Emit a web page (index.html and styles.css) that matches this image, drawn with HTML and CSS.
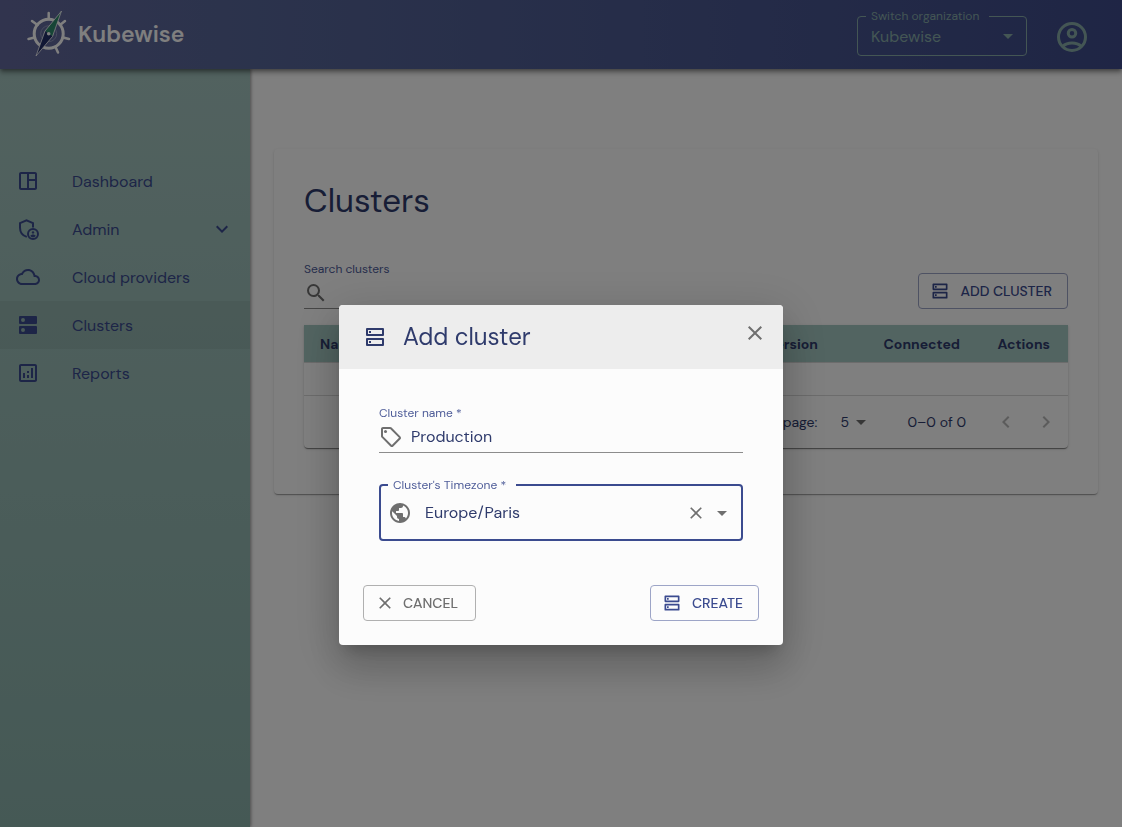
FILE: index.html
```html
<!DOCTYPE html>
<html lang="en">
<head>
<meta charset="utf-8">
<meta name="viewport" content="width=device-width, initial-scale=1">
<title>Kubewise – Clusters</title>
<link rel="stylesheet" href="styles.css">
</head>
<body>
<svg class="sprite" aria-hidden="true">
  <symbol id="i-dashboard" viewBox="0 0 24 24"><path d="M19 3H5c-1.1 0-2 .9-2 2v14c0 1.1.9 2 2 2h14c1.1 0 2-.9 2-2V5c0-1.1-.9-2-2-2zM5 19V5h6v14H5zm14 0h-6v-7h6v7zm0-9h-6V5h6v5z"/></symbol>
  <symbol id="i-admin" viewBox="0 0 24 24"><path fill="none" stroke="currentColor" stroke-width="2" d="M17 10.5V6.2l-6.5-2.9L4 6.2v4.6c0 4.4 2.700 7.900 6.800 9.100"/><circle cx="17" cy="17" r="5" fill="none" stroke="currentColor" stroke-width="2"/><circle cx="17" cy="15.400" r="1.200"/><path d="M14.300 18.900c.3-1 1.700-1.500 2.700-1.500s2.400.5 2.700 1.500c-.6.8-1.600 1.300-2.700 1.300s-2.100-.5-2.700-1.300z"/></symbol>
  <symbol id="i-cloud" viewBox="0 0 24 24"><path d="M19.350 10.040C18.670 6.590 15.640 4 12 4 9.110 4 6.600 5.640 5.350 8.040 2.340 8.360 0 10.910 0 14c0 3.310 2.690 6 6 6h13c2.760 0 5-2.240 5-5 0-2.640-2.050-4.780-4.650-4.960zM19 18H6c-2.210 0-4-1.790-4-4 0-2.050 1.530-3.760 3.560-3.970l1.070-.11.5-.95C8.080 7.140 9.940 6 12 6c2.620 0 4.880 1.860 5.390 4.430l.3 1.500 1.530.11c1.560.1 2.780 1.410 2.780 2.960 0 1.650-1.350 3-3 3z"/></symbol>
  <symbol id="i-dns" viewBox="0 0 24 24"><path fill-rule="evenodd" d="M4 3h16a1 1 0 0 1 1 1v6a1 1 0 0 1-1 1H4a1 1 0 0 1-1-1V4a1 1 0 0 1 1-1zm3 2a2 2 0 1 0 0 4 2 2 0 0 0 0-4zM4 13h16a1 1 0 0 1 1 1v6a1 1 0 0 1-1 1H4a1 1 0 0 1-1-1v-6a1 1 0 0 1 1-1zm3 2a2 2 0 1 0 0 4 2 2 0 0 0 0-4z"/></symbol>
  <symbol id="i-reports" viewBox="0 0 24 24"><path d="M19 3H5c-1.100 0-2 .9-2 2v14c0 1.100.9 2 2 2h14c1.100 0 2-.9 2-2V5c0-1.100-.9-2-2-2zm0 16H5V5h14v14zM7 12h2v5H7zm8-5h2v10h-2zm-4 7h2v3h-2zm0-4h2v2h-2z"/></symbol>
  <symbol id="i-storage" viewBox="0 0 24 24"><path fill="none" stroke="currentColor" stroke-width="2" stroke-linejoin="round" d="M4 4h16v6H4zM4 14h16v6H4z"/><path d="M6 6h2v2H6zM6 16h2v2H6z"/></symbol>
  <symbol id="i-search" viewBox="0 0 24 24"><path d="M15.500 14h-.79l-.28-.27A6.470 6.470 0 0 0 16 9.500 6.500 6.500 0 1 0 9.500 16c1.610 0 3.090-.59 4.230-1.570l.27.28v.79l5 4.990L20.490 19l-4.990-5zm-6 0C7.010 14 5 11.990 5 9.500S7.010 5 9.500 5 14 7.010 14 9.500 11.990 14 9.500 14z"/></symbol>
  <symbol id="i-tag" viewBox="0 0 24 24"><path d="M21.410 11.410l-8.830-8.830c-.37-.37-.88-.58-1.410-.58H4c-1.100 0-2 .9-2 2v7.170c0 .53.21 1.040.59 1.410l8.830 8.830c.78.78 2.050.78 2.830 0l7.170-7.170c.78-.78.78-2.040-.01-2.830zM12.830 20L4 11.170V4h7.170L20 12.830 12.830 20z"/><circle cx="6.500" cy="6.500" r="1.500"/></symbol>
  <symbol id="i-globe" viewBox="0 0 24 24"><path d="M12 2C6.480 2 2 6.480 2 12s4.480 10 10 10 10-4.480 10-10S17.520 2 12 2zm-1 17.930c-3.950-.49-7-3.850-7-7.930 0-.62.08-1.210.21-1.790L9 15v1c0 1.100.9 2 2 2v1.930zm6.900-2.540c-.26-.81-1-1.390-1.900-1.390h-1v-3c0-.55-.45-1-1-1H8v-2h2c.55 0 1-.45 1-1V7h2c1.100 0 2-.9 2-2v-.41c2.930 1.190 5 4.060 5 7.410 0 2.080-.8 3.970-2.100 5.390z"/></symbol>
  <symbol id="i-close" viewBox="0 0 24 24"><path d="M19 6.410L17.590 5 12 10.590 6.410 5 5 6.410 10.590 12 5 17.590 6.410 19 12 13.410 17.590 19 19 17.590 13.410 12z"/></symbol>
  <symbol id="i-caret" viewBox="0 0 24 24"><path d="M7 10l5 5 5-5z"/></symbol>
  <symbol id="i-down" viewBox="0 0 24 24"><path d="M7.410 8.590L12 13.170l4.590-4.580L18 10l-6 6-6-6z"/></symbol>
  <symbol id="i-left" viewBox="0 0 24 24"><path d="M15.410 7.410L14 6l-6 6 6 6 1.410-1.410L10.830 12z"/></symbol>
  <symbol id="i-right" viewBox="0 0 24 24"><path d="M8.590 7.410L10 6l6 6-6 6-1.410-1.410L13.170 12z"/></symbol>
  <symbol id="i-account" viewBox="0 0 24 24"><g fill="none" stroke="currentColor" stroke-width="2"><circle cx="12" cy="12" r="9"/><circle cx="12" cy="9.500" r="2.500"/><path d="M5.800 18.200C7.400 16.700 9.700 16 12 16s4.600.7 6.200 2.200"/></g></symbol>
</svg>

<header class="topbar">
  <a class="brand" href="#">
    <svg class="brand-mark" viewBox="0 0 46 46" aria-hidden="true">
      <g fill="none" stroke="#fff" stroke-width="3">
        <circle cx="22.700" cy="23.700" r="14.500"/>
        <path stroke-width="2.500" stroke-linecap="round" d="M22.700 9V3M11.500 15L6 11M34 15l5-4M8.500 27.500L2.500 29M37 27.500l6 1.500M29.500 37l2.500 5.500"/>
      </g>
      <g fill="none" stroke="#8f96bb" stroke-width="1"><circle cx="22.700" cy="23.700" r="8"/><circle cx="22.700" cy="23.700" r="4.500"/></g>
      <path fill="#2f8a6c" d="M35.500 1L19 21l7.500 5.500z"/>
      <path fill="#232e68" d="M10 46l9-25 7.500 5.500z"/>
      <path fill="none" stroke="#fff" stroke-opacity=".8" stroke-width="1" d="M35.500 1L19 21l-9 25 16.500-19.500z"/>
      <circle cx="22.700" cy="23.700" r="1.800" fill="#fff"/>
    </svg>
    <span class="brand-name">Kubewise</span>
  </a>
  <div class="topbar-tools">
    <fieldset class="outlined org">
      <legend><label for="org">Switch organization</label></legend>
      <div class="select-wrap">
        <select id="org"><option>Kubewise</option></select>
        <svg class="icon caret"><use href="#i-caret"/></svg>
      </div>
    </fieldset>
    <button class="icon-btn account" type="button" aria-label="Account"><svg><use href="#i-account"/></svg></button>
  </div>
</header>

<div class="shell">
  <nav class="sidebar">
    <a class="nav-item" href="#"><svg class="icon"><use href="#i-dashboard"/></svg><span>Dashboard</span></a>
    <a class="nav-item" href="#"><svg class="icon"><use href="#i-admin"/></svg><span>Admin</span><svg class="icon expand"><use href="#i-down"/></svg></a>
    <a class="nav-item" href="#"><svg class="icon"><use href="#i-cloud"/></svg><span>Cloud providers</span></a>
    <a class="nav-item active" href="#" aria-current="page"><svg class="icon"><use href="#i-dns"/></svg><span>Clusters</span></a>
    <a class="nav-item" href="#"><svg class="icon"><use href="#i-reports"/></svg><span>Reports</span></a>
  </nav>

  <main class="content">
    <section class="card">
      <h1>Clusters</h1>
      <div class="toolbar">
        <div class="field search">
          <label for="search">Search clusters</label>
          <div class="field-row"><svg class="icon"><use href="#i-search"/></svg><input id="search" type="text"></div>
        </div>
        <button class="btn primary" type="button"><svg><use href="#i-storage"/></svg>ADD CLUSTER</button>
      </div>
      <div class="table-box">
        <table>
          <thead><tr><th>Name</th><th class="num version">Version</th><th class="num connected">Connected</th><th class="num actions">Actions</th></tr></thead>
          <tbody><tr><td colspan="4"></td></tr></tbody>
        </table>
        <div class="pager">
          <label for="rows">Rows per page:</label>
          <div class="select-wrap rows">
            <select id="rows"><option>5</option></select>
            <svg class="icon caret"><use href="#i-caret"/></svg>
          </div>
          <span class="range">0–0 of 0</span>
          <button class="icon-btn page" type="button" aria-label="Previous page" disabled><svg class="icon"><use href="#i-left"/></svg></button>
          <button class="icon-btn page" type="button" aria-label="Next page" disabled><svg class="icon"><use href="#i-right"/></svg></button>
        </div>
      </div>
    </section>
  </main>
</div>

<div class="backdrop">
  <form class="dialog" role="dialog" aria-modal="true" aria-labelledby="dialog-title">
    <div class="dialog-head">
      <svg class="icon"><use href="#i-storage"/></svg>
      <h2 id="dialog-title">Add cluster</h2>
      <button class="icon-btn close" type="button" aria-label="Close"><svg class="icon"><use href="#i-close"/></svg></button>
    </div>
    <div class="dialog-body">
      <div class="field">
        <label for="name">Cluster name *</label>
        <div class="field-row"><svg class="icon"><use href="#i-tag"/></svg><input id="name" type="text" value="Production"></div>
      </div>
      <fieldset class="outlined timezone">
        <legend><label for="tz">Cluster's Timezone *</label></legend>
        <div class="tz-row">
          <svg class="icon"><use href="#i-globe"/></svg>
          <input id="tz" type="text" role="combobox" aria-expanded="false" value="Europe/Paris">
          <button class="icon-btn" type="button" aria-label="Clear"><svg class="small"><use href="#i-close"/></svg></button>
          <button class="icon-btn" type="button" aria-label="Open"><svg class="icon"><use href="#i-caret"/></svg></button>
        </div>
      </fieldset>
    </div>
    <div class="dialog-actions">
      <button class="btn neutral" type="button"><svg><use href="#i-close"/></svg>CANCEL</button>
      <button class="btn primary" type="submit"><svg><use href="#i-storage"/></svg>CREATE</button>
    </div>
  </form>
</div>
</body>
</html>
```
FILE: styles.css
```css
:root {
  --primary: #3b4b8f;
  --ink: #2f3b6c;
  --label: #4f5d99;
  --sage: #a5c9c3;
  --grey: #6f6f6f;
}

* { box-sizing: border-box; }

body {
  margin: 0;
  min-height: 100vh;
  display: flex;
  flex-direction: column;
  background: #fefefe;
  color: var(--ink);
  font: 16px/24px "DM Sans", Inter, "Open Sans", sans-serif;
}

h1, h2 { margin: 0; font-weight: 400; }
input, select, button { font: inherit; color: inherit; }
svg { display: block; fill: currentColor; flex: none; }
.sprite { position: absolute; width: 0; height: 0; }
.icon { width: 24px; height: 24px; }
.small { width: 20px; height: 20px; }

.icon-btn {
  display: flex;
  padding: 0;
  border: 0;
  background: none;
  color: var(--grey);
}

/* top bar */
.topbar {
  position: relative;
  display: flex;
  align-items: center;
  justify-content: space-between;
  height: 69px;
  padding: 0 32px 0 26px;
  background: linear-gradient(90deg, #63689c, #586799 20%, #3e4b8a);
  box-shadow: 0 2px 4px -1px rgba(0, 0, 0, .4), 0 4px 5px rgba(0, 0, 0, .25);
}
.brand {
  display: flex;
  align-items: center;
  gap: 6px;
  padding-bottom: 4px;
  color: #fff;
  text-decoration: none;
}
.brand-mark { width: 46px; height: 46px; }
.brand-name { padding-top: 2px; font-size: 23px; font-weight: 600; line-height: 32px; }
.topbar-tools { display: flex; align-items: center; gap: 27px; color: #88ada9; }
.account { margin-top: 4px; color: inherit; }
.account svg { width: 36px; height: 36px; }

.outlined {
  min-width: 0;
  margin: 0;
  padding: 0 0 6px;
  border: 1px solid currentColor;
  border-radius: 4px;
}
.outlined legend { padding: 0 10px 0 5px; font-size: 12px; line-height: 14px; white-space: nowrap; }
.org { width: 170px; margin-bottom: 4px; }
.org legend { margin-left: 8px; }

.select-wrap { position: relative; display: flex; align-items: center; }
.select-wrap select {
  width: 100%;
  padding: 0;
  border: 0;
  appearance: none;
  background: none;
  outline: 0;
}
.select-wrap .caret { position: absolute; right: 6px; pointer-events: none; }
.org select { padding: 2px 0 0 13px; height: 26px; }

/* page */
.shell { flex: 1; display: flex; }
.sidebar {
  width: 250px;
  padding-top: 88px;
  background: linear-gradient(#a4c4bf, #8bb2ab);
  box-shadow: 1px 0 3px rgba(0, 0, 0, .4);
}
.nav-item {
  display: flex;
  align-items: center;
  gap: 32px;
  height: 48px;
  padding: 0 16px;
  color: var(--primary);
  text-decoration: none;
}
.nav-item span { padding-top: 1px; }
.nav-item.active { background: rgba(0, 0, 0, .05); }
.expand { margin-left: auto; }

.content { flex: 1; min-width: 0; padding: 80px 24px 24px; }
.card {
  padding: 32px 30px 46px;
  border-radius: 4px;
  background: #fefefe;
  box-shadow: 0 2px 1px -1px rgba(0, 0, 0, .2), 0 1px 1px rgba(0, 0, 0, .14), 0 1px 3px rgba(0, 0, 0, .12);
}
.card h1 { font-size: 33px; line-height: 40px; }
.toolbar {
  display: flex;
  align-items: flex-end;
  justify-content: space-between;
  margin: 41px 0 16px;
}

.field { display: flex; flex-direction: column; gap: 3px; }
.field > label, .outlined.timezone label { color: var(--label); font-size: 12px; line-height: 14px; }
.field-row {
  display: flex;
  align-items: center;
  gap: 8px;
  height: 30px;
  padding-bottom: 2px;
  border-bottom: 1px solid #8c8c8c;
}
.field-row svg { color: var(--grey); }
input { width: 100%; min-width: 0; padding: 0; border: 0; outline: 0; background: none; }
.search { width: 240px; }

.btn {
  display: flex;
  align-items: center;
  gap: 10px;
  height: 36px;
  padding: 0 15px 0 11px;
  border: 1px solid #9da5c7;
  border-radius: 4px;
  background: none;
  color: var(--primary);
  font-size: 14px;
  font-weight: 500;
}
.btn svg { width: 20px; height: 20px; }
.btn.neutral { gap: 8px; padding-right: 17px; border-color: #b0b0b0; color: var(--grey); }

.table-box {
  border-radius: 0 0 4px 4px;
  box-shadow: 0 2px 1px -1px rgba(0, 0, 0, .3), 0 1px 1px rgba(0, 0, 0, .2), 0 1px 3px rgba(0, 0, 0, .15);
  font-size: 14px;
}
table { width: 100%; border-collapse: collapse; table-layout: fixed; }
th { height: 37px; padding: 2px 16px 0; background: var(--sage); font-weight: 700; text-align: left; }
.num { padding: 2px 18px 0 0; text-align: right; }
.version { width: 160px; }
.connected { width: 142px; }
.actions { width: 90px; }
td { height: 33px; padding: 0; border: 1px solid #d8d8d8; border-width: 1px 0; }

.pager { display: flex; align-items: center; justify-content: flex-end; height: 52px; padding-right: 2px; }
.rows { width: 33px; margin: 0 29px 0 14px; }
.rows select { padding-left: 9px; height: 24px; }
.rows .caret { right: -9px; color: var(--grey); }
.range { margin: 0 20px 0 14px; }
.page { padding: 8px; color: #b8b8b8; }

/* dialog */
.backdrop {
  position: fixed;
  inset: 0;
  display: flex;
  align-items: flex-start;
  justify-content: center;
  padding-top: 305px;
  background: rgba(0, 0, 0, .5);
}
.dialog {
  width: 444px;
  max-width: 100%;
  overflow: hidden;
  border-radius: 4px;
  background: #fcfcfc;
  box-shadow: 0 11px 15px -7px rgba(0, 0, 0, .2), 0 24px 38px 3px rgba(0, 0, 0, .14), 0 9px 46px 8px rgba(0, 0, 0, .12);
}
.dialog-head {
  display: flex;
  align-items: center;
  gap: 16px;
  height: 64px;
  padding: 0 16px 0 24px;
  background: #ededed;
}
.dialog-head h2 { flex: 1; font-size: 24px; line-height: 32px; }
.close { margin-bottom: 8px; }
.dialog-body { display: grid; gap: 25px; padding: 37px 40px 44px; }
.timezone { border: 2px solid var(--primary); }
.timezone legend { margin-left: 7px; }
.tz-row { display: flex; align-items: center; height: 41px; padding: 0 7px; }
.tz-row > svg { margin-right: 13px; color: var(--grey); }
.tz-row .icon-btn { margin-left: 4px; }
.dialog-actions { display: flex; justify-content: space-between; padding: 0 24px 24px; }
```
